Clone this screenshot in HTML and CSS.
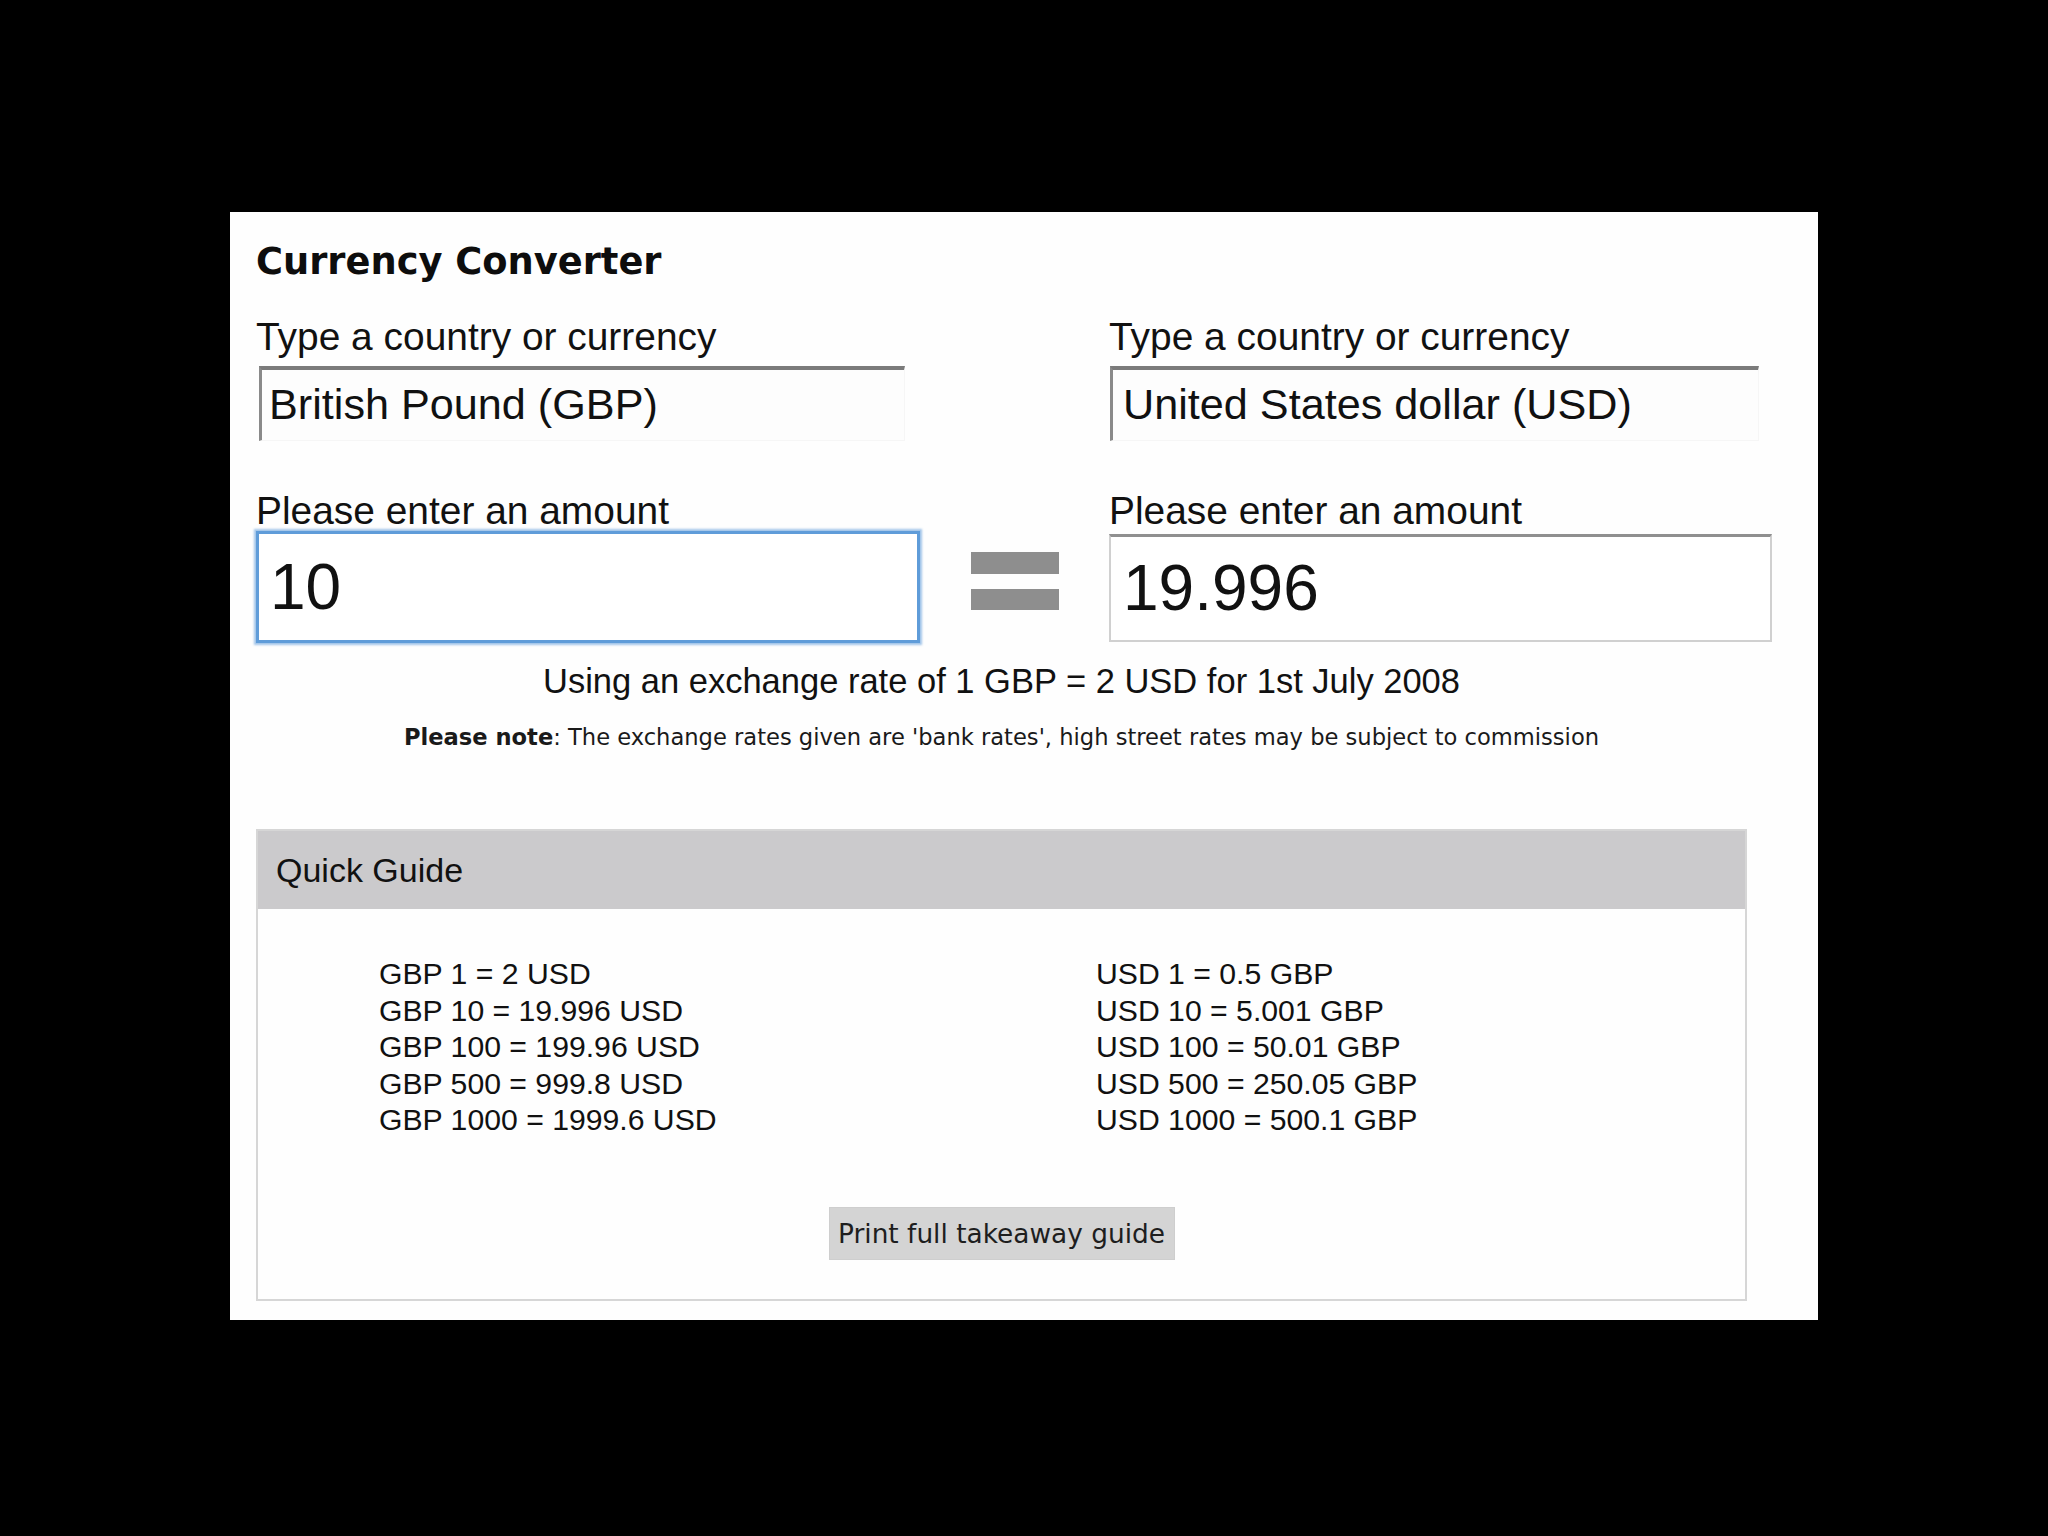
FILE: index.html
```html
<!DOCTYPE html>
<html lang="en">
<head>
<meta charset="utf-8">
<title>Currency Converter</title>
<link rel="stylesheet" href="styles.css">
</head>
<body>
<div class="panel">
  <h1 class="title">Currency Converter</h1>
  <div class="content">
    <div class="converter">
      <div class="label">Type a country or currency</div>
      <div class="spacer"></div>
      <div class="label">Type a country or currency</div>

      <div class="select left">British Pound (GBP)</div>
      <div class="spacer"></div>
      <div class="select right">United States dollar (USD)</div>

      <div class="label second">Please enter an amount</div>
      <div class="spacer"></div>
      <div class="label second">Please enter an amount</div>

      <div class="amount focus">10</div>
      <div class="equals" aria-label="equals"><div class="bar"></div><div class="bar"></div></div>
      <div class="amount result">19.996</div>
    </div>

    <p class="rate">Using an exchange rate of 1 GBP = 2 USD for 1st July 2008</p>
    <p class="note"><b>Please note</b>: The exchange rates given are 'bank rates', high street rates may be subject to commission</p>

    <div class="guide">
      <div class="guide-head">Quick Guide</div>
      <div class="guide-body">
        <div class="rates">
          <div class="col">
            <div>GBP 1 = 2 USD</div>
            <div>GBP 10 = 19.996 USD</div>
            <div>GBP 100 = 199.96 USD</div>
            <div>GBP 500 = 999.8 USD</div>
            <div>GBP 1000 = 1999.6 USD</div>
          </div>
          <div class="col">
            <div>USD 1 = 0.5 GBP</div>
            <div>USD 10 = 5.001 GBP</div>
            <div>USD 100 = 50.01 GBP</div>
            <div>USD 500 = 250.05 GBP</div>
            <div>USD 1000 = 500.1 GBP</div>
          </div>
        </div>
        <button class="print" type="button">Print full takeaway guide</button>
      </div>
    </div>
  </div>
</div>
</body>
</html>
```
FILE: styles.css
```css
html, body {
  margin: 0;
  padding: 0;
}
body {
  background: #000;
  width: 2048px;
  height: 1536px;
  overflow: hidden;
  font-family: "Liberation Sans", Arial, sans-serif;
  color: #111;
}
.panel {
  margin: 212px 0 0 230px;
  width: 1588px;
  height: 1108px;
  box-sizing: border-box;
  background: #fefefe;
  padding: 29px 0 0 26px;
  overflow: hidden;
}
.title {
  margin: 0 0 32px;
  font-family: "DejaVu Sans", sans-serif;
  font-weight: bold;
  font-size: 36.8px;
  line-height: 42px;
  color: #0d0d0d;
}
.content {
  width: 1491px;
}
.converter {
  display: grid;
  grid-template-columns: 664px 189px 663px;
}
.label {
  font-size: 38.9px;
  line-height: 44px;
  white-space: nowrap;
}
.label.second {
  margin-top: 48px;
}
.select {
  margin-top: 7px;
  height: 75px;
  box-sizing: border-box;
  border-top: 4px solid #7b7b7b;
  border-left: 3px solid #8a8a8a;
  border-right: 1px solid #f6f6f6;
  border-bottom: 1px solid #f6f6f6;
  background: #fdfdfd;
  font-size: 43.2px;
  line-height: 69px;
  padding-left: 7px;
  white-space: nowrap;
}
.select.left {
  margin-left: 3px;
  width: 646px;
}
.select.right {
  margin-left: 1px;
  width: 649px;
  padding-left: 10px;
}
.amount {
  height: 112px;
  margin-top: -2px;
  box-sizing: border-box;
  font-size: 64px;
  white-space: nowrap;
  background: #fff;
}
.amount.focus {
  border: 3px solid #5f9cd9;
  box-shadow: 0 0 2px 2px rgba(130, 176, 226, 0.75);
  line-height: 106px;
  padding-left: 11px;
}
.amount.result {
  margin-top: 1px;
  height: 108px;
  border: 2px solid #d0d0d0;
  border-top: 3px solid #8f8f8f;
  line-height: 103px;
  padding-left: 12px;
}
.equals {
  align-self: start;
  justify-self: center;
  margin-top: 19px;
  width: 88px;
}
.bar {
  height: 22px;
  background: #8e8e8e;
}
.bar + .bar {
  margin-top: 15px;
  height: 21px;
}
.rate {
  margin: 18px 0 0;
  text-align: center;
  font-size: 34.5px;
  line-height: 40px;
  white-space: nowrap;
}
.note {
  margin: 22px 0 0;
  text-align: center;
  font-family: "DejaVu Sans", sans-serif;
  font-size: 22.6px;
  line-height: 28px;
  color: #1a1a1a;
  white-space: nowrap;
}
.guide {
  margin-top: 78px;
  border: 2px solid #d6d6d6;
  background: #fefefe;
}
.guide-head {
  height: 78px;
  box-sizing: border-box;
  background: #cbcacc;
  padding: 19px 0 0 18px;
  font-size: 34px;
  line-height: 40px;
}
.guide-body {
  padding: 47px 0 39px;
}
.rates {
  margin-left: 121px;
  display: grid;
  grid-template-columns: 717px auto;
  font-size: 30.2px;
  line-height: 36.5px;
  white-space: nowrap;
}
.print {
  display: block;
  margin: 68.5px auto 0;
  width: 346px;
  height: 53px;
  padding: 0;
  border: 1px solid #cecece;
  border-radius: 0;
  background: #d4d4d4;
  font-family: "DejaVu Sans", sans-serif;
  font-size: 26.4px;
  line-height: 52px;
  color: #1e1e1e;
  -webkit-appearance: none;
  appearance: none;
}
```
